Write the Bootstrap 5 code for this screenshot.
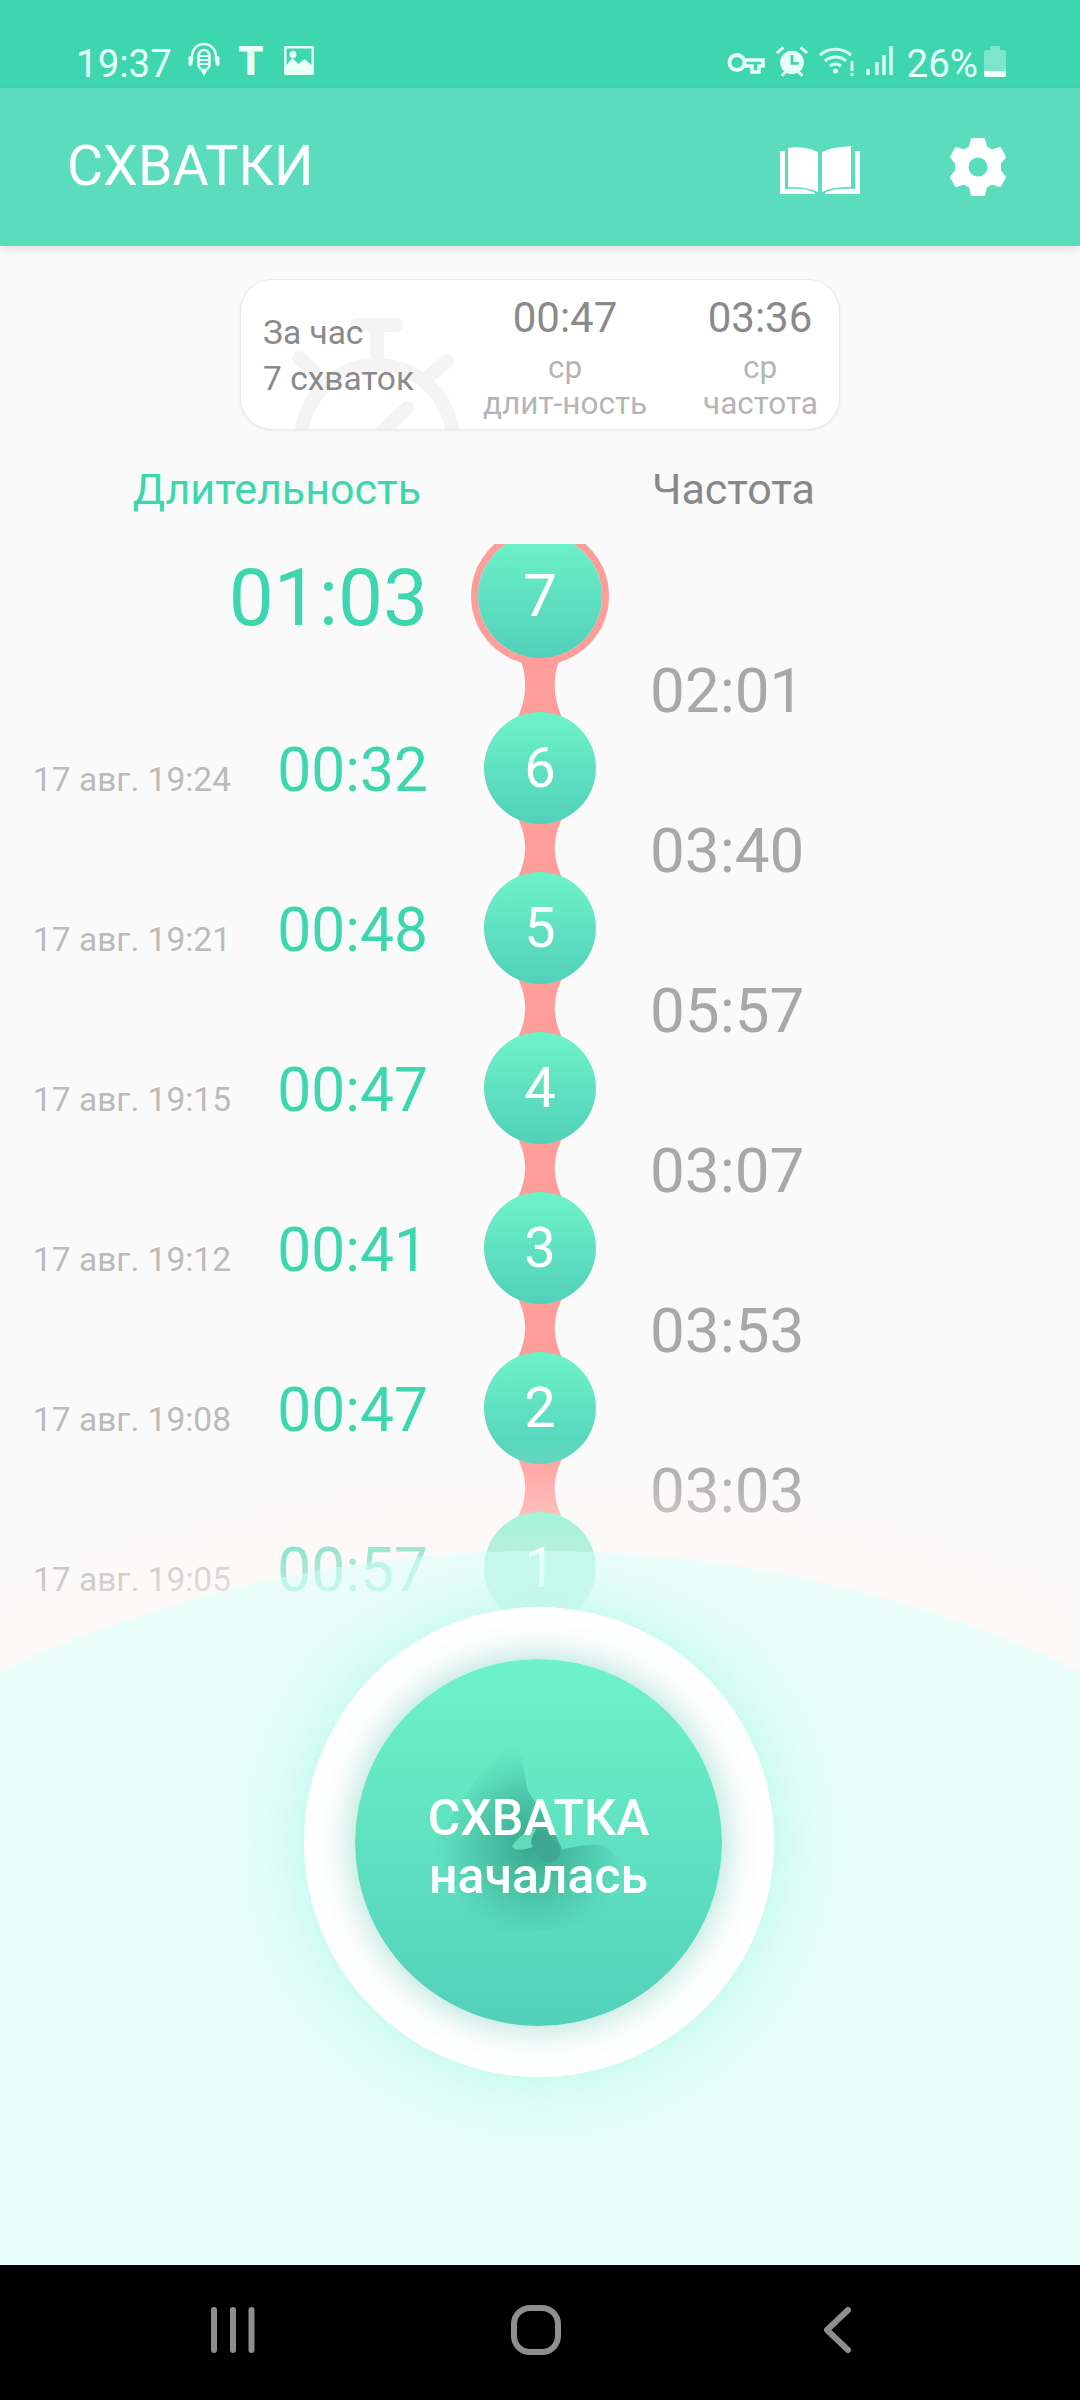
<!DOCTYPE html>
<html lang="ru">

<head>
    <meta charset="UTF-8">
    <meta name="viewport" content="width=device-width, initial-scale=1.0">
    <title>Схватки</title>
    <link href="https://cdn.jsdelivr.net/npm/bootstrap@5.3.3/dist/css/bootstrap.min.css" rel="stylesheet">
    <script src="https://cdn.jsdelivr.net/npm/bootstrap@5.3.3/dist/js/bootstrap.bundle.min.js"></script>

    <style>
        body {
            margin: 0;
            background: #fafafa;
            font-family: Roboto, "Liberation Sans", sans-serif;
        }

        .screen {
            width: 1080px;
            height: 2400px;
            overflow: hidden;
        }

        .status-bar {
            height: 88px;
            flex: none;
            background: #3dd6ae;
            color: #e8fff8;
            font-size: 38.500px;
            line-height: 40px;
            padding: 41px 74px 0 76px;
        }

        .status-text {
            margin-top: 3px;
        }

        .status-t {
            font-weight: 900;
            font-size: 40px;
            margin-left: 17px;
            margin-top: 1px;
            width: 28px;
            text-align: center;
        }

        .status-img {
            margin: 5px 0 0 19px;
        }

        .status-right > * + * {
            margin-left: 10px;
        }

        .status-right > .status-pct {
            margin-left: 14px;
        }

        .status-right > .icon-battery {
            margin-left: 6px;
        }

        .icon-key {
            margin-top: 11px;
        }

        .icon-low {
            margin-top: 5px;
        }

        .app-bar {
            height: 158px;
            flex: none;
            background: #5bddbd;
            color: #fff;
            padding: 0 74px 0 67px;
            box-shadow: 0 3px 10px rgba(0, 0, 0, .1);
            position: relative;
            z-index: 2;
        }

        .app-title {
            font-size: 55.500px;
            line-height: 1;
        }

        .icon-book {
            margin: 6px 90px 0 auto;
        }

        .content {
            background: #fafafa;
            min-height: 0;
        }

        .summary-card {
            width: 600px;
            height: 151px;
            margin: 33px auto 0;
            background: #fff;
            border: 1px solid #e9e9e9;
            border-radius: 32px;
            box-shadow: 0 1px 3px rgba(0, 0, 0, .06);
            overflow: hidden;
            padding: 0 22px;
            color: #8a8a8a;
        }

        .card-watch {
            position: absolute;
            left: 0;
            top: 0;
        }

        .card-left {
            font-size: 33.500px;
            line-height: 46px;
            padding-top: 30px;
        }

        .stat-value {
            font-size: 42px;
            line-height: 48px;
            height: 48px;
            margin-top: 14px;
        }

        .stat-label {
            font-size: 31.500px;
            line-height: 36px;
            color: #b5b5b5;
            margin-top: 8px;
        }

        .stat-one {
            width: 164px;
            margin-right: 56px;
        }

        .stat-two {
            width: 114px;
        }

        .column-heads {
            height: 114px;
            font-size: 43px;
            line-height: 118px;
            flex: none;
        }

        .head-duration {
            width: 428px;
            text-align: right;
            padding-right: 7px;
            color: #3dd6ae;
        }

        .head-rate {
            margin-left: 224px;
            color: #888;
        }

        .timeline {
            min-height: 0;
            overflow: hidden;
        }

        .tl-item {
            height: 112px;
            position: relative;
            z-index: 1;
        }

        .tl-gap {
            height: 48px;
        }

        .tl-left {
            width: 428px;
            padding-left: 33px;
        }

        .tl-mid {
            width: 224px;
        }

        .tl-date {
            font-size: 33.500px;
            color: #bbb;
        }

        .tl-time {
            font-size: 60.500px;
            color: #3dd6ae;
            line-height: 60px;
            padding-top: 10px;
        }

        .tl-rate {
            font-size: 62px;
            line-height: 48px;
            color: #a8a8a8;
            padding-top: 3px;
            margin-left: -2px;
        }

        .is-current .tl-rate {
            padding-top: 9px;
        }

        .tl-link {
            overflow: visible;
        }

        .tl-dot {
            width: 112px;
            height: 112px;
            background: linear-gradient(#6df3c8, #52d0ba);
            color: #fff;
            font-size: 56px;
        }

        .is-current.tl-item {
            height: 124px;
            margin-top: -10px;
        }

        .is-current.tl-gap {
            height: 54px;
        }

        .is-current .tl-dot {
            width: 124px;
            height: 124px;
            box-shadow: 0 0 0 7px #ff9d9a;
            font-size: 60px;
        }

        .is-current .tl-time {
            font-size: 80px;
            padding-top: 3px;
            line-height: 78px;
        }

        .fade-panel {
            position: absolute;
            inset: 0;
            padding: 1361px 3px 0 0;
            z-index: 2;
            background: radial-gradient(circle at 540px 2580px, #e6fef9 1180px, rgba(230, 254, 249, .75) 1275px, rgba(255, 248, 246, .55) 1275px, rgba(250, 250, 250, 0) 1385px);
        }

        .start-ring {
            width: 470px;
            height: 470px;
            background: #fff;
            box-shadow: 0 0 70px rgba(110, 240, 205, .4);
        }

        .start-btn {
            width: 367px;
            height: 367px;
            background: linear-gradient(#6df3c8, #52d0ba);
            box-shadow: 0 0 36px rgba(70, 190, 160, .5);
            color: #fff;
            font-size: 50px;
            font-weight: 500;
            line-height: 58px;
            overflow: hidden;
        }

        .start-figure {
            position: absolute;
            left: 0;
            top: 0;
        }

        .start-text {
            position: relative;
            padding-top: 9px;
        }

        .nav-bar {
            height: 135px;
            flex: none;
            background: #000;
        }
    </style>

</head>

<body>

    <div class="screen d-flex flex-column">

        <div class="status-bar d-flex align-items-start">
            <span class="status-text">19:37</span>
            <svg class="ms-3" width="32" height="36" viewBox="0 0 32 36" fill="none" stroke="#e8fff8" stroke-width="2.500">
                <path d="M4 20V15a12 12 0 0 1 24 0v5" />
                <rect x="0.500" y="15" width="4" height="10" rx="2" fill="#e8fff8" stroke="none" />
                <rect x="27.500" y="15" width="4" height="10" rx="2" fill="#e8fff8" stroke="none" />
                <rect x="10.500" y="9" width="11" height="20" rx="5.500" />
                <path d="M11 15h10M11 19h10M11 23h10" stroke-width="2" />
                <path d="M13 30h6l-3 5z" fill="#e8fff8" stroke="none" />
            </svg>
            <span class="status-t">T</span>
            <svg class="status-img" width="30" height="29" viewBox="0 0 30 29">
                <path fill="#e8fff8" fill-rule="evenodd" d="M2 0h26a2 2 0 0 1 2 2v25a2 2 0 0 1-2 2H2a2 2 0 0 1-2-2V2a2 2 0 0 1 2-2zM2.500 2.500V19l6-7 6 6 6-5 7 6V2.500zM9 5a3.500 3.500 0 1 1 0 7 3.500 3.500 0 0 1 0-7z" />
            </svg>

            <span class="status-right ms-auto d-flex align-items-start">
                <svg class="icon-key" width="38" height="22" viewBox="0 0 38 22" fill="none" stroke="#e8fff8" stroke-width="4">
                    <circle cx="10" cy="10.500" r="7.500" />
                    <path d="M17 8h19v6h-4v6h-7v-6h-8" stroke-width="3.500" />
                </svg>
                <svg class="icon-low" width="34" height="31" viewBox="0 0 36 32">
                    <circle cx="18" cy="17" r="12.500" fill="#e8fff8" />
                    <path d="M18 9v9h7" fill="none" stroke="#3dd6ae" stroke-width="3" />
                    <path d="M2 7l7-6M34 7l-7-6M7 31l4-4M29 31l-4-4" stroke="#e8fff8" stroke-width="3" fill="none" />
                </svg>
                <svg class="icon-low" width="36" height="30" viewBox="0 0 36 30" fill="none" stroke="#d6fbf0" stroke-width="3">
                    <path d="M1 9a24 24 0 0 1 31 0M6 15a16 16 0 0 1 21 0M11 20a9 9 0 0 1 11 0" />
                    <circle cx="16.500" cy="25" r="2.500" fill="#e8fff8" stroke="none" />
                    <path d="M33 15v10M33 27v3" />
                </svg>
                <svg class="icon-low" width="28" height="30" viewBox="0 0 28 30">
                    <path d="M3 23v6M12 16v13M19 9v20M26 0v29" stroke="#d6fbf0" stroke-width="3.500" fill="none" />
                </svg>
                <span class="status-text status-pct">26%</span>
                <svg class="icon-low icon-battery" width="22" height="31" viewBox="0 0 22 31">
                    <path d="M6 0h10v4h4a2 2 0 0 1 2 2v19H0V6a2 2 0 0 1 2-2h4z" fill="#7de5c9" />
                    <path d="M0 25h22v4a2 2 0 0 1-2 2H2a2 2 0 0 1-2-2z" fill="#f2fffb" />
                </svg>
            </span>
        </div>

        <div class="app-bar d-flex align-items-center">
            <span class="app-title">СХВАТКИ</span>
            <svg class="icon-book" width="80" height="48" viewBox="0 0 80 48" fill="#fff">
                <path d="M8 2C18 0 30 2 38 6V46C30 42 18 41 8 41Z" />
                <path d="M42 6C50 2 60 1 71 0V41C60 41 50 42 42 46Z" />
                <path d="M0 5H5V43C18 42 30 43 35 47V48H0Z" />
                <path d="M80 5H75V43C62 42 50 43 45 47V48H80Z" />
            </svg>
            <svg width="56" height="58" viewBox="0 0 56 58">
                <path fill="#fff" stroke="#fff" stroke-width="2" stroke-linejoin="round" fill-rule="evenodd" d="M22 1h12l2 8 6 3.500 8-2.500 5 9-5 6.500v7l5 6.500-5 9-8-2.500-6 3.500-2 8H22l-2-8-6-3.500-8 2.500-5-9 5-6.500v-7l-5-6.500 5-9 8 2.500L20 9zM28 18.500a10.500 10.500 0 1 0 0 21 10.500 10.500 0 0 0 0-21z" />
            </svg>
        </div>

        <div class="content position-relative flex-grow-1 d-flex flex-column">
            <div class="summary-card position-relative d-flex flex-none">
                <svg class="card-watch" width="300" height="150" viewBox="0 0 300 150" fill="none" stroke="#f4f4f4" stroke-width="14" stroke-linecap="round">
                    <circle cx="136" cy="161" r="76" />
                    <path d="M116 45h39M136 45v35M58 78l18 16M206 81l-20 17M166 128l-25 24" />
                </svg>
                <div class="card-left position-relative flex-grow-1">За час<br>7 схваток</div>
                <div class="stat-one position-relative text-center text-nowrap">
                    <div class="stat-value">00:47</div>
                    <div class="stat-label">ср<br>длит-ность</div>
                </div>
                <div class="stat-two position-relative text-center text-nowrap">
                    <div class="stat-value">03:36</div>
                    <div class="stat-label">ср<br>частота</div>
                </div>
            </div>

            <div class="column-heads d-flex">
                <div class="head-duration">Длительность</div>
                <div class="head-rate">Частота</div>
            </div>

            <div id="timeline" class="timeline flex-grow-1"></div>

            <div class="fade-panel d-flex justify-content-center">
                <div class="start-ring rounded-circle d-flex align-items-center justify-content-center">
                    <div class="start-btn position-relative rounded-circle d-flex align-items-center justify-content-center text-center">
                        <svg class="start-figure" width="367" height="367" viewBox="228 238 1100 1100">
                            <defs>
                                <radialGradient id="figureShade" gradientUnits="userSpaceOnUse" cx="760" cy="790" r="300">
                                    <stop offset="0" stop-color="#2f9a82" stop-opacity=".85" />
                                    <stop offset=".55" stop-color="#38a98e" stop-opacity=".45" />
                                    <stop offset="1" stop-color="#4cc7aa" stop-opacity="0" />
                                </radialGradient>
                            </defs>
                            <path fill="url(#figureShade)" d="M700 500C745 530 730 600 750 640C790 700 830 760 850 810C880 800 920 795 960 795C1010 810 1040 850 1010 1000C900 1060 700 1060 580 1050C550 980 540 900 460 810C520 700 600 560 700 500Z" />
                            <path fill="#5fdcbb" d="M698 800C718 770 745 750 772 745L758 772C760 785 770 795 765 800C740 810 710 815 698 800Z" />
                            <path fill="#3da88f" d="M760 770C780 740 800 750 815 770C835 790 850 810 840 830C820 860 790 850 770 815C760 800 750 790 760 770Z" />
                        </svg>
                        <div class="start-text">СХВАТКА<br>началась</div>
                    </div>
                </div>
            </div>
        </div>

        <div class="nav-bar d-flex">
            <svg width="1080" height="135" viewBox="0 0 1080 135" fill="none" stroke="#8e8e8e" stroke-width="6" stroke-linecap="round" stroke-linejoin="round">
                <path d="M214 45v40M233 45v40M251.500 45v40" />
                <rect x="514" y="43" width="44" height="44" rx="16" />
                <path d="M848 45L827 65L848 85" />
            </svg>
        </div>

    </div>

    <script>
        // newest first, rate is the gap to the previous contraction
        const contractions = [
            { num: 7, date: '', time: '01:03', rate: '02:01', current: true },
            { num: 6, date: '17 авг. 19:24', time: '00:32', rate: '03:40' },
            { num: 5, date: '17 авг. 19:21', time: '00:48', rate: '05:57' },
            { num: 4, date: '17 авг. 19:15', time: '00:47', rate: '03:07' },
            { num: 3, date: '17 авг. 19:12', time: '00:41', rate: '03:53' },
            { num: 2, date: '17 авг. 19:08', time: '00:47', rate: '03:03' },
            { num: 1, date: '17 авг. 19:05', time: '00:57', rate: '' }
        ];

        const list = document.getElementById('timeline');
        contractions.forEach(item => {
            const cur = item.current ? 'is-current' : '';
            const h = item.current ? 54 : 48;
            list.innerHTML += `
                <div class="tl-item d-flex align-items-center ${cur}">
                    <div class="tl-left d-flex align-items-baseline justify-content-between">
                        <span class="tl-date">${item.date}</span>
                        <span class="tl-time">${item.time}</span>
                    </div>
                    <div class="tl-mid d-flex justify-content-center">
                        <div class="tl-dot rounded-circle d-flex align-items-center justify-content-center">${item.num}</div>
                    </div>
                </div>
                <div class="tl-gap d-flex ${cur}">
                    <div class="tl-left"></div>
                    <div class="tl-mid d-flex justify-content-center">
                        <svg class="tl-link" width="38" height="${h}" viewBox="0 0 38 ${h}">
                            <path fill="#ff9d9a" d="M-4 -8H42C31 ${h / 3} 31 ${2 * h / 3} 42 ${h + 8}H-4C7 ${2 * h / 3} 7 ${h / 3} -4 -8Z" />
                        </svg>
                    </div>
                    <div class="tl-rate">${item.rate}</div>
                </div>`;
        });
    </script>
</body>

</html>
